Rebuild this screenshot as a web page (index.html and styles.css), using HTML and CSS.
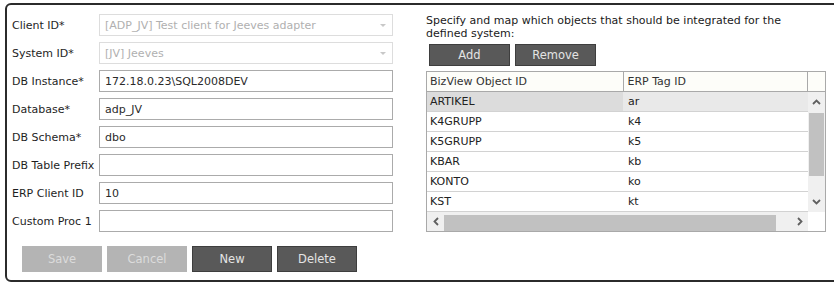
FILE: index.html
```html
<!DOCTYPE html>
<html>
<head>
<meta charset="utf-8">
<link rel="stylesheet" href="styles.css">
</head>
<body>
<div class="panel">
  <div class="left">
    <div class="row"><label class="lbl">Client ID*</label><div class="field disabled"><span>[ADP_JV] Test client for Jeeves adapter</span><span class="caret"></span></div></div>
    <div class="row"><label class="lbl">System ID*</label><div class="field disabled"><span>[JV] Jeeves</span><span class="caret"></span></div></div>
    <div class="row"><label class="lbl">DB Instance*</label><div class="field">172.18.0.23\SQL2008DEV</div></div>
    <div class="row"><label class="lbl">Database*</label><div class="field">adp_JV</div></div>
    <div class="row"><label class="lbl">DB Schema*</label><div class="field">dbo</div></div>
    <div class="row"><label class="lbl">DB Table Prefix</label><div class="field"></div></div>
    <div class="row"><label class="lbl">ERP Client ID</label><div class="field">10</div></div>
    <div class="row"><label class="lbl">Custom Proc 1</label><div class="field"></div></div>
    <div class="actions">
      <button class="btn off">Save</button>
      <button class="btn off">Cancel</button>
      <button class="btn">New</button>
      <button class="btn">Delete</button>
    </div>
  </div>
  <div class="right">
    <p class="intro">Specify and map which objects that should be integrated for the defined system:</p>
    <div class="tools">
      <button class="btn small">Add</button>
      <button class="btn small">Remove</button>
    </div>
    <div class="grid">
      <div class="head">
        <div class="c1">BizView Object ID</div>
        <div class="c2">ERP Tag ID</div>
        <div class="c3"></div>
      </div>
      <div class="body">
        <div class="rows">
          <div class="r sel"><div class="c1">ARTIKEL</div><div class="c2">ar</div></div>
          <div class="r"><div class="c1">K4GRUPP</div><div class="c2">k4</div></div>
          <div class="r"><div class="c1">K5GRUPP</div><div class="c2">k5</div></div>
          <div class="r"><div class="c1">KBAR</div><div class="c2">kb</div></div>
          <div class="r"><div class="c1">KONTO</div><div class="c2">ko</div></div>
          <div class="r"><div class="c1">KST</div><div class="c2">kt</div></div>
        </div>
        <div class="vscroll">
          <div class="arr"><svg width="9" height="6" viewBox="0 0 9 6"><path d="M1 5 L4.5 1.5 L8 5" fill="none" stroke="#606060" stroke-width="1.8"/></svg></div>
          <div class="vtrack"><div class="vthumb"></div></div>
          <div class="arr"><svg width="9" height="6" viewBox="0 0 9 6"><path d="M1 1 L4.5 4.5 L8 1" fill="none" stroke="#606060" stroke-width="1.8"/></svg></div>
        </div>
      </div>
      <div class="foot">
        <div class="hscroll">
          <div class="harr"><svg width="6" height="9" viewBox="0 0 6 9"><path d="M5 1 L1.5 4.5 L5 8" fill="none" stroke="#606060" stroke-width="1.8"/></svg></div>
          <div class="hthumb"></div>
          <div class="harr"><svg width="6" height="9" viewBox="0 0 6 9"><path d="M1 1 L4.5 4.5 L1 8" fill="none" stroke="#606060" stroke-width="1.8"/></svg></div>
        </div>
        <div class="corner"></div>
      </div>
    </div>
  </div>
</div>
</body>
</html>
```
FILE: styles.css
```css
html, body {
  margin: 0;
  padding: 0;
  background: #ffffff;
  overflow: hidden;
}
body {
  font-family: "DejaVu Sans", Verdana, sans-serif;
  font-size: 11px;
  color: #222;
  width: 834px;
  height: 284px;
}
.panel {
  margin: 3px 0 0 5px;
  width: 840px;
  height: 275px;
  border: 2px solid #2b2b2b;
  border-radius: 6px;
  display: flex;
  box-sizing: content-box;
}
.left {
  padding: 9px 0 0 5px;
  width: 400px;
}
.row {
  display: flex;
  align-items: center;
  height: 22px;
  margin-bottom: 6px;
}
.lbl {
  width: 87px;
  flex: none;
  white-space: nowrap;
  color: #1e1e1e;
}
.field {
  width: 294px;
  height: 22px;
  box-sizing: border-box;
  border: 1px solid #ababab;
  padding: 0 5px;
  display: flex;
  align-items: center;
  justify-content: space-between;
  color: #2a2a2a;
  white-space: nowrap;
}
.field.disabled {
  border-color: #dddddd;
  color: #b0b0b0;
}
.caret {
  width: 0;
  height: 0;
  border-left: 3px solid transparent;
  border-right: 3px solid transparent;
  border-top: 3px solid #c8c8c8;
  margin-right: 1px;
}
.actions {
  display: flex;
  gap: 5px;
  padding: 8px 0 0 10px;
}
.btn {
  width: 80px;
  height: 26px;
  box-sizing: border-box;
  border: 1px solid #3e3e3e;
  background: #595959;
  color: #e4e4e4;
  font-family: "DejaVu Sans", Verdana, sans-serif;
  font-size: 11.5px;
  padding: 0;
}
.btn.off {
  background: #b4b4b4;
  border-color: #b4b4b4;
  color: #dcdcdc;
}
.btn.small {
  height: 22px;
  width: 81px;
}
.right {
  padding: 0 0 0 14px;
  width: 400px;
}
.intro {
  margin: 9px 0 0 0;
  width: 366px;
  line-height: 13px;
  font-size: 11px;
  color: #1a1a1a;
}
.tools {
  display: flex;
  gap: 5px;
  margin: 4px 0 0 3px;
}
.grid {
  margin-top: 5px;
  width: 400px;
  box-sizing: border-box;
  border: 1px solid #a9a9a9;
  background: #fff;
}
.head {
  display: flex;
  height: 19px;
  border-bottom: 1px solid #a9a9a9;
  background: #fdfdf9;
}
.head > div {
  display: flex;
  align-items: center;
  color: #333;
}
.c1 {
  width: 196px;
  padding-left: 3px;
  box-sizing: border-box;
}
.c2 {
  width: 185px;
  padding-left: 5px;
  box-sizing: border-box;
}
.head .c2 {
  border-left: 1px solid #a9a9a9;
  padding-left: 4px;
}
.head .c3 {
  width: 17px;
  border-left: 1px solid #a9a9a9;
}
.body {
  display: flex;
}
.rows {
  width: 381px;
}
.r {
  display: flex;
  height: 19px;
  border-bottom: 1px solid #d2d2d2;
}
.r > div {
  display: flex;
  align-items: center;
  color: #222;
}
.r.sel .c1 { background: #dcdcdc; }
.r.sel .c2 { background: #e9e9e9; }
.vscroll {
  width: 17px;
  background: #f0f0f0;
  display: flex;
  flex-direction: column;
}
.arr {
  height: 20px;
  display: flex;
  align-items: center;
  justify-content: center;
}
.vtrack {
  flex: 1;
  padding: 1px 1px 0 1px;
}
.vthumb {
  height: 63px;
  background: #c1c1c1;
}
.foot {
  display: flex;
  height: 19px;
}
.hscroll {
  width: 381px;
  background: #f0f0f0;
  display: flex;
  align-items: stretch;
}
.harr {
  width: 17px;
  display: flex;
  align-items: center;
  justify-content: center;
}
.hthumb {
  width: 332px;
  background: #c1c1c1;
  margin-top: 3px;
}
.hscroll .harr:last-child {
  margin-left: auto;
}
.corner {
  width: 17px;
  background: #fff;
}
```
